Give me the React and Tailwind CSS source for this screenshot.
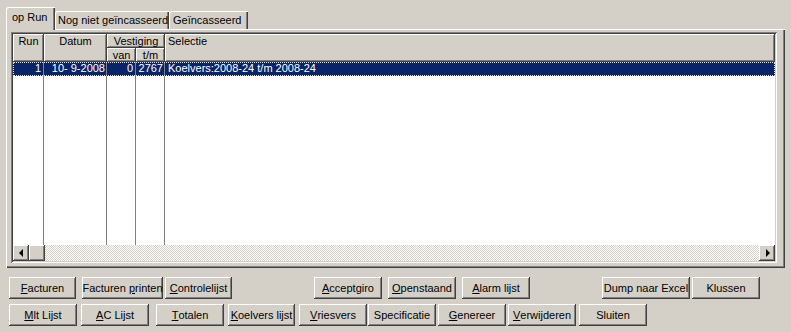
import React from "react";

// Windows classic 3D edges
const RAISED =
  "shadow-[inset_-1px_-1px_#404040,inset_1px_1px_#ffffff,inset_-2px_-2px_#808080,inset_2px_2px_#d4d0c8]";

const ROW1 = [
  { cls: "ml-[9px] w-[67px]", pre: "", key: "F", post: "acturen" },
  { cls: "ml-[6px] w-[81px]", pre: "Facturen ", key: "p", post: "rinten" },
  { cls: "ml-[2px] w-[67px]", pre: "", key: "C", post: "ontrolelijst" },
  { cls: "ml-[82px] w-[68px]", pre: "", key: "A", post: "cceptgiro" },
  { cls: "ml-[6px] w-[68px]", pre: "", key: "O", post: "penstaand" },
  { cls: "ml-[6px] w-[68px]", pre: "", key: "A", post: "larm lijst" },
  { cls: "ml-[72px] w-[88px]", pre: "Dump naar Excel", key: "", post: "" },
  { cls: "ml-[2px] w-[68px]", pre: "Klussen", key: "", post: "" },
];

const ROW2 = [
  { cls: "ml-[9px] w-[68px]", pre: "", key: "M", post: "lt Lijst" },
  { cls: "ml-[4px] w-[68px]", pre: "", key: "A", post: "C Lijst" },
  { cls: "ml-[7px] w-[68px]", pre: "", key: "T", post: "otalen" },
  { cls: "ml-[4px] w-[67px]", pre: "", key: "K", post: "oelvers lijst" },
  { cls: "ml-[4px] w-[68px]", pre: "", key: "V", post: "riesvers" },
  { cls: "ml-[1px] w-[68px]", pre: "Specificatie", key: "", post: "" },
  { cls: "ml-[2px] w-[68px]", pre: "", key: "G", post: "enereer" },
  { cls: "ml-[2px] w-[68px]", pre: "", key: "V", post: "erwijderen" },
  { cls: "ml-[3px] w-[68px]", pre: "Sluiten", key: "", post: "" },
];

function Btn({ b }) {
  return (
    <button
      type="button"
      className={`${b.cls} h-[22px] shrink-0 bg-[#d4d0c8] ${RAISED} flex items-center justify-center whitespace-pre text-black`}
    >
      {b.pre}
      {b.key && <u>{b.key}</u>}
      {b.post}
    </button>
  );
}

function HeadCell({ className = "", children }) {
  return (
    <div className={`${className} bg-[#d4d0c8] ${RAISED} px-[2px] pt-[1px] leading-[13px] shrink-0`}>
      {children}
    </div>
  );
}

export default function App() {
  return (
    <div className="w-[791px] h-[332px] bg-[#d4d0c8] overflow-hidden text-[11px] text-black font-['Liberation_Sans',Arial,sans-serif]">
      {/* Tabs */}
      <div className="flex items-end h-[29px] pl-[6px] pt-[7px]">
        <div className="relative z-10 h-[23px] -mb-px w-[49px] bg-[#d4d0c8] rounded-tl-[2px] shadow-[inset_1px_1px_#ffffff,inset_-1px_0_#404040,inset_-2px_0_#808080] pl-[6px] pt-[4px] leading-[13px]">
          op Run
        </div>
        <div className="h-[18px] w-[114px] bg-[#d4d0c8] rounded-tl-[2px] shadow-[inset_1px_1px_#ffffff,inset_-1px_0_#404040,inset_-2px_0_#808080] pl-[3px] pt-[3px] leading-[13px]">
          Nog niet geïncasseerd
        </div>
        <div className="h-[18px] w-[79px] bg-[#d4d0c8] rounded-tl-[2px] shadow-[inset_1px_1px_#ffffff,inset_-1px_0_#404040,inset_-2px_0_#808080] pl-[4px] pt-[3px] leading-[13px]">
          Geïncasseerd
        </div>
      </div>

      {/* Tab panel */}
      <div className="ml-[6px] w-[779px] h-[239px] shadow-[inset_1px_1px_#ffffff,inset_-1px_-1px_#404040,inset_-2px_-2px_#808080] pl-[5px] pt-[3px]">
        {/* Grid */}
        <div className="w-[766px] h-[231px] bg-white p-[2px] shadow-[inset_1px_1px_#808080,inset_-1px_-1px_#ffffff,inset_2px_2px_#404040,inset_-2px_-2px_#d4d0c8] flex flex-col">
          {/* Header */}
          <div className="flex h-[28px] shrink-0 bg-[#d4d0c8]">
            <HeadCell className="w-[31px] h-[28px] text-center">Run</HeadCell>
            <HeadCell className="w-[63px] h-[28px] text-center">Datum</HeadCell>
            <div className="w-[58px] flex flex-col shrink-0">
              <HeadCell className="h-[14px] text-center">Vestiging</HeadCell>
              <div className="flex">
                <HeadCell className="w-[29px] h-[14px] text-center">van</HeadCell>
                <HeadCell className="w-[29px] h-[14px] text-center">t/m</HeadCell>
              </div>
            </div>
            <HeadCell className="flex-1 h-[28px] pl-[3px]">Selectie</HeadCell>
          </div>

          {/* Selected row */}
          <div className="flex h-[14px] shrink-0 bg-[#0a246a] text-white leading-[13px] outline-1 outline-dotted outline-[#e0e0e0] -outline-offset-1">
            <div className="w-[31px] border-r border-[#808080] text-right pr-[2px]">1</div>
            <div className="w-[63px] border-r border-[#808080] text-right pr-[1px] whitespace-pre">10- 9-2008</div>
            <div className="w-[29px] border-r border-[#808080] text-right pr-[2px]">0</div>
            <div className="w-[29px] border-r border-[#808080] text-right pr-[1px] overflow-hidden whitespace-nowrap">2767</div>
            <div className="flex-1 pl-[3px] whitespace-nowrap">Koelvers:2008-24 t/m 2008-24</div>
          </div>

          {/* Empty body */}
          <div className="flex flex-1">
            <div className="w-[31px] border-r border-[#808080]" />
            <div className="w-[63px] border-r border-[#808080]" />
            <div className="w-[29px] border-r border-[#808080]" />
            <div className="w-[29px] border-r border-[#808080]" />
            <div className="flex-1" />
          </div>

          {/* Horizontal scrollbar */}
          <div className="flex h-[16px] shrink-0">
            <div className={`w-[16px] h-[16px] bg-[#d4d0c8] ${RAISED} flex items-center justify-center`}>
              <div className="w-0 h-0 border-y-[4px] border-y-transparent border-r-[4px] border-r-black -ml-px" />
            </div>
            <div className={`w-[16px] h-[16px] bg-[#d4d0c8] ${RAISED}`} />
            <div className="flex-1 bg-[repeating-conic-gradient(#ffffff_0_25%,#d4d0c8_0_50%)] bg-[length:2px_2px]" />
            <div className={`w-[16px] h-[16px] bg-[#d4d0c8] ${RAISED} flex items-center justify-center`}>
              <div className="w-0 h-0 border-y-[4px] border-y-transparent border-l-[4px] border-l-black ml-px" />
            </div>
          </div>
        </div>
      </div>

      {/* Buttons */}
      <div className="flex mt-[9px]">
        {ROW1.map((b, i) => (
          <Btn key={i} b={b} />
        ))}
      </div>
      <div className="flex mt-[5px]">
        {ROW2.map((b, i) => (
          <Btn key={i} b={b} />
        ))}
      </div>
    </div>
  );
}
